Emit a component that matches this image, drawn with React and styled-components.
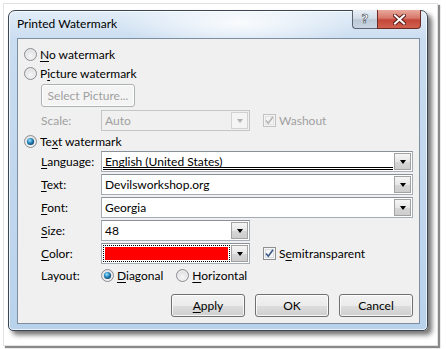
import React from 'react';
import styled, { createGlobalStyle, css } from 'styled-components';

const GlobalStyle = createGlobalStyle`
  html, body {
    margin: 0;
    padding: 0;
    background: #ffffff;
  }
  body {
    font-family: 'Lato', 'Liberation Sans', sans-serif;
    font-size: 12px;
    color: #000000;
  }
`;

const Page = styled.div`
  width: 446px;
  height: 349px;
  overflow: hidden;
  background: #ffffff;
`;

const Mat = styled.div`
  box-sizing: border-box;
  margin: 3px 0 0 3px;
  width: 435px;
  height: 343px;
  border: 1px solid #e2e2e2;
  box-shadow: 2px 2px 1px #8a8a8a;
  padding: 6px 0 0 4px;
`;

const Window = styled.div`
  box-sizing: border-box;
  width: 420px;
  height: 321px;
  border: 1px solid #3b4654;
  border-radius: 7px 7px 5px 5px;
  padding: 0 7px 6px 8px;
  display: flex;
  flex-direction: column;
  background:
    radial-gradient(ellipse 120px 30px at 230px 12px, rgba(255,255,255,0.85), rgba(255,255,255,0)),
    linear-gradient(to bottom, #e2edf8 0px, #c9dcf0 30px, #b9d2ec 100%);
  box-shadow: inset 0 0 0 1px rgba(255,255,255,0.7), 4px 4px 5px rgba(0,0,0,0.55);
`;

const TitleBar = styled.div`
  height: 27px;
  display: flex;
  align-items: flex-start;
  justify-content: space-between;
`;

const Title = styled.div`
  height: 14px;
  line-height: 14px;
  margin-top: 6px;
`;

const CaptionGroup = styled.div`
  display: flex;
  margin-top: -1px;
  margin-right: -1px;
`;

const CaptionButton = styled.div`
  box-sizing: border-box;
  height: 19px;
  width: ${p => p.$w}px;
  border: 1px solid #5a6470;
  border-top: none;
  display: flex;
  align-items: center;
  justify-content: center;
  ${p => p.$close ? css`
    border-radius: 0 0 4px 0;
    border-color: #6b2a24;
    background: linear-gradient(to bottom, #e9a99c 0%, #d7786a 45%, #c4463a 55%, #d0624f 100%);
  ` : css`
    border-radius: 0 0 0 4px;
    border-right: none;
    background: linear-gradient(to bottom, #e8eef5 0%, #d3dde8 45%, #bcc8d6 55%, #c9d5e2 100%);
  `}
`;

const Client = styled.div`
  flex: 1;
  box-sizing: border-box;
  border: 1px solid #7d8ea0;
  background: #f0f0f0;
  padding: 7px 6px 0 6px;
  display: flex;
  flex-direction: column;
`;

const OptionRow = styled.label`
  display: flex;
  align-items: center;
  height: 17px;
  gap: 3px;
  margin-top: ${p => p.$mt || 0}px;
  color: ${p => p.$disabled ? '#a0a0a0' : '#000'};
`;

const Indented = styled.div`
  padding-left: 17px;
  display: flex;
  align-items: center;
  margin-top: ${p => p.$mt || 0}px;
`;

const FieldRow = styled.div`
  padding-left: 17px;
  display: flex;
  align-items: center;
  height: ${p => p.$h || 21}px;
  margin-top: ${p => p.$mt || 0}px;
`;

const FieldLabel = styled.span`
  width: 60px;
  flex-shrink: 0;
  color: ${p => p.$disabled ? '#a0a0a0' : '#000'};
`;

const U = styled.span`
  text-decoration: underline;
  text-underline-offset: 2px;
`;

const PushButton = styled.div`
  box-sizing: border-box;
  width: ${p => p.$w}px;
  height: 23px;
  border: 1px solid ${p => p.$disabled ? '#adb2b5' : '#707070'};
  border-radius: 3px;
  display: flex;
  align-items: center;
  justify-content: center;
  color: ${p => p.$disabled ? '#a0a0a0' : '#000'};
  background: ${p => p.$disabled
    ? '#f4f4f4'
    : 'linear-gradient(to bottom, #f2f2f2 0%, #ebebeb 50%, #dddddd 51%, #cfcfcf 100%)'};
  box-shadow: inset 0 0 0 1px rgba(255,255,255,0.8);
`;

const Combo = styled.div`
  box-sizing: border-box;
  width: ${p => p.$w ? `${p.$w}px` : 'auto'};
  flex: ${p => p.$w ? '0 0 auto' : '1'};
  height: 21px;
  border: 1px solid ${p => p.$disabled ? '#c6c6c6' : '#a5acb5'};
  border-top-color: ${p => p.$disabled ? '#c6c6c6' : '#8a9099'};
  background: ${p => p.$disabled ? '#f0f0f0' : '#ffffff'};
  display: flex;
  align-items: center;
  padding: 1px;
`;

const ComboValue = styled.div`
  flex: 1;
  height: 100%;
  display: flex;
  align-items: center;
  padding-left: 2px;
  color: ${p => p.$disabled ? '#a0a0a0' : '#000'};
  ${p => p.$double && css`
    box-sizing: border-box;
    border-bottom: 3px double #000;
    margin-right: 1px;
    padding-top: 2px;
  `}
`;

const Swatch = styled.div`
  flex: 1;
  height: 100%;
  box-sizing: border-box;
  border: 1px dotted #000;
  padding: 1px;
  margin-right: 1px;
`;

const SwatchFill = styled.div`
  height: 100%;
  background: ${p => p.$color};
`;

const DropButton = styled.div`
  box-sizing: border-box;
  width: 17px;
  height: 17px;
  border: 1px solid ${p => p.$disabled ? '#d2d2d2' : '#a2a2a2'};
  background: ${p => p.$disabled
    ? '#f4f4f4'
    : 'linear-gradient(to bottom, #f5f5f5 0%, #e6e6e6 50%, #d6d6d6 51%, #cdcdcd 100%)'};
  display: flex;
  align-items: center;
  justify-content: center;
`;

const Triangle = styled.div`
  width: 0;
  height: 0;
  border-left: 3.5px solid transparent;
  border-right: 3.5px solid transparent;
  border-top: 4px solid ${p => p.$disabled ? '#b0b0b0' : '#000'};
  margin-top: 1px;
`;

const CheckWrap = styled.label`
  display: flex;
  align-items: center;
  gap: 3px;
  margin-left: 13px;
  color: ${p => p.$disabled ? '#a0a0a0' : '#000'};
`;

const LayoutRadio = styled.label`
  display: flex;
  align-items: center;
  gap: 3px;
  margin-right: 13px;
`;

const ButtonBar = styled.div`
  display: flex;
  justify-content: flex-end;
  gap: 10px;
  margin-top: 10px;
`;

const HelpMark = styled.span`
  font-family: 'DejaVu Sans', sans-serif;
  font-size: 12px;
  font-weight: bold;
  color: #ffffff;
  -webkit-text-stroke: 0.6px #45505c;
`;

const Radio = ({ checked }) => (
  <svg width="13" height="13" viewBox="0 0 13 13">
    <defs>
      <radialGradient id="rbg" cx="0.5" cy="0.6" r="0.6">
        <stop offset="0" stopColor="#f8f8f8" />
        <stop offset="1" stopColor="#d6d6d6" />
      </radialGradient>
      <radialGradient id="rdot" cx="0.4" cy="0.35" r="0.7">
        <stop offset="0" stopColor="#9ae4ff" />
        <stop offset="0.5" stopColor="#2c8bc0" />
        <stop offset="1" stopColor="#0e3a63" />
      </radialGradient>
    </defs>
    <circle cx="6.5" cy="6.5" r="6" fill="url(#rbg)" stroke="#8b8f94" strokeWidth="1" />
    <circle cx="6.5" cy="6.5" r="4.6" fill="none" stroke="#ffffff" strokeOpacity="0.6" strokeWidth="0.8" />
    {checked && <circle cx="6.5" cy="6.5" r="3.6" fill="url(#rdot)" />}
  </svg>
);

const Check = ({ disabled }) => (
  <svg width="13" height="13" viewBox="0 0 13 13">
    <rect x="0.5" y="0.5" width="12" height="12" fill={disabled ? '#f4f4f4' : '#f6f6f6'} stroke={disabled ? '#c2c2c2' : '#8e8f8f'} />
    <rect x="2.5" y="2.5" width="8" height="8" fill="none" stroke={disabled ? '#e2e2e2' : '#d8dde3'} />
    <path d="M3 6.5 L5.3 9.2 L10 2.8" fill="none" stroke={disabled ? '#b5b5b5' : '#3b5a86'} strokeWidth="1.6" />
  </svg>
);

const CloseGlyph = () => (
  <svg width="13" height="11" viewBox="0 0 13 11">
    <path d="M2 1.5 L11 9.5 M11 1.5 L2 9.5" stroke="#5a1b15" strokeWidth="4" strokeLinecap="square" />
    <path d="M2 1.5 L11 9.5 M11 1.5 L2 9.5" stroke="#ffffff" strokeWidth="2" strokeLinecap="square" />
  </svg>
);

const ComboBox = ({ width, disabled, value, double, swatch }) => (
  <Combo $w={width} $disabled={disabled}>
    {swatch ? (
      <Swatch><SwatchFill $color={swatch} /></Swatch>
    ) : (
      <ComboValue $disabled={disabled} $double={double}>{value}</ComboValue>
    )}
    <DropButton $disabled={disabled}><Triangle $disabled={disabled} /></DropButton>
  </Combo>
);

export default function App() {
  return (
    <Page>
      <GlobalStyle />
      <Mat>
        <Window>
          <TitleBar>
            <Title>Printed Watermark</Title>
            <CaptionGroup>
              <CaptionButton $w={25}><HelpMark>?</HelpMark></CaptionButton>
              <CaptionButton $w={44} $close><CloseGlyph /></CaptionButton>
            </CaptionGroup>
          </TitleBar>
          <Client>
            <OptionRow>
              <Radio />
              <span><U>N</U>o watermark</span>
            </OptionRow>
            <OptionRow $mt={2}>
              <Radio />
              <span>P<U>i</U>cture watermark</span>
            </OptionRow>
            <Indented $mt={2}>
              <PushButton $w={94} $disabled>Select Picture...</PushButton>
            </Indented>
            <FieldRow $mt={3}>
              <FieldLabel $disabled>Scale:</FieldLabel>
              <ComboBox width={149} disabled value="Auto" />
              <CheckWrap $disabled>
                <Check disabled />
                <span>Washout</span>
              </CheckWrap>
            </FieldRow>
            <OptionRow $mt={2}>
              <Radio checked />
              <span>Te<U>x</U>t watermark</span>
            </OptionRow>
            <FieldRow $mt={1}>
              <FieldLabel><U>L</U>anguage:</FieldLabel>
              <ComboBox value="English (United States)" double />
            </FieldRow>
            <FieldRow $mt={2}>
              <FieldLabel><U>T</U>ext:</FieldLabel>
              <ComboBox value="Devilsworkshop.org" />
            </FieldRow>
            <FieldRow $mt={2}>
              <FieldLabel><U>F</U>ont:</FieldLabel>
              <ComboBox value="Georgia" />
            </FieldRow>
            <FieldRow $mt={2}>
              <FieldLabel><U>S</U>ize:</FieldLabel>
              <ComboBox width={149} value="48" />
            </FieldRow>
            <FieldRow $mt={2}>
              <FieldLabel><U>C</U>olor:</FieldLabel>
              <ComboBox width={149} swatch="#ff0000" />
              <CheckWrap>
                <Check />
                <span>S<U>e</U>mitransparent</span>
              </CheckWrap>
            </FieldRow>
            <FieldRow $mt={3} $h={17}>
              <FieldLabel>Layout:</FieldLabel>
              <LayoutRadio>
                <Radio checked />
                <span><U>D</U>iagonal</span>
              </LayoutRadio>
              <LayoutRadio>
                <Radio />
                <span><U>H</U>orizontal</span>
              </LayoutRadio>
            </FieldRow>
            <ButtonBar>
              <PushButton $w={74}><span><U>A</U>pply</span></PushButton>
              <PushButton $w={74}>OK</PushButton>
              <PushButton $w={74}>Cancel</PushButton>
            </ButtonBar>
          </Client>
        </Window>
      </Mat>
    </Page>
  );
}
